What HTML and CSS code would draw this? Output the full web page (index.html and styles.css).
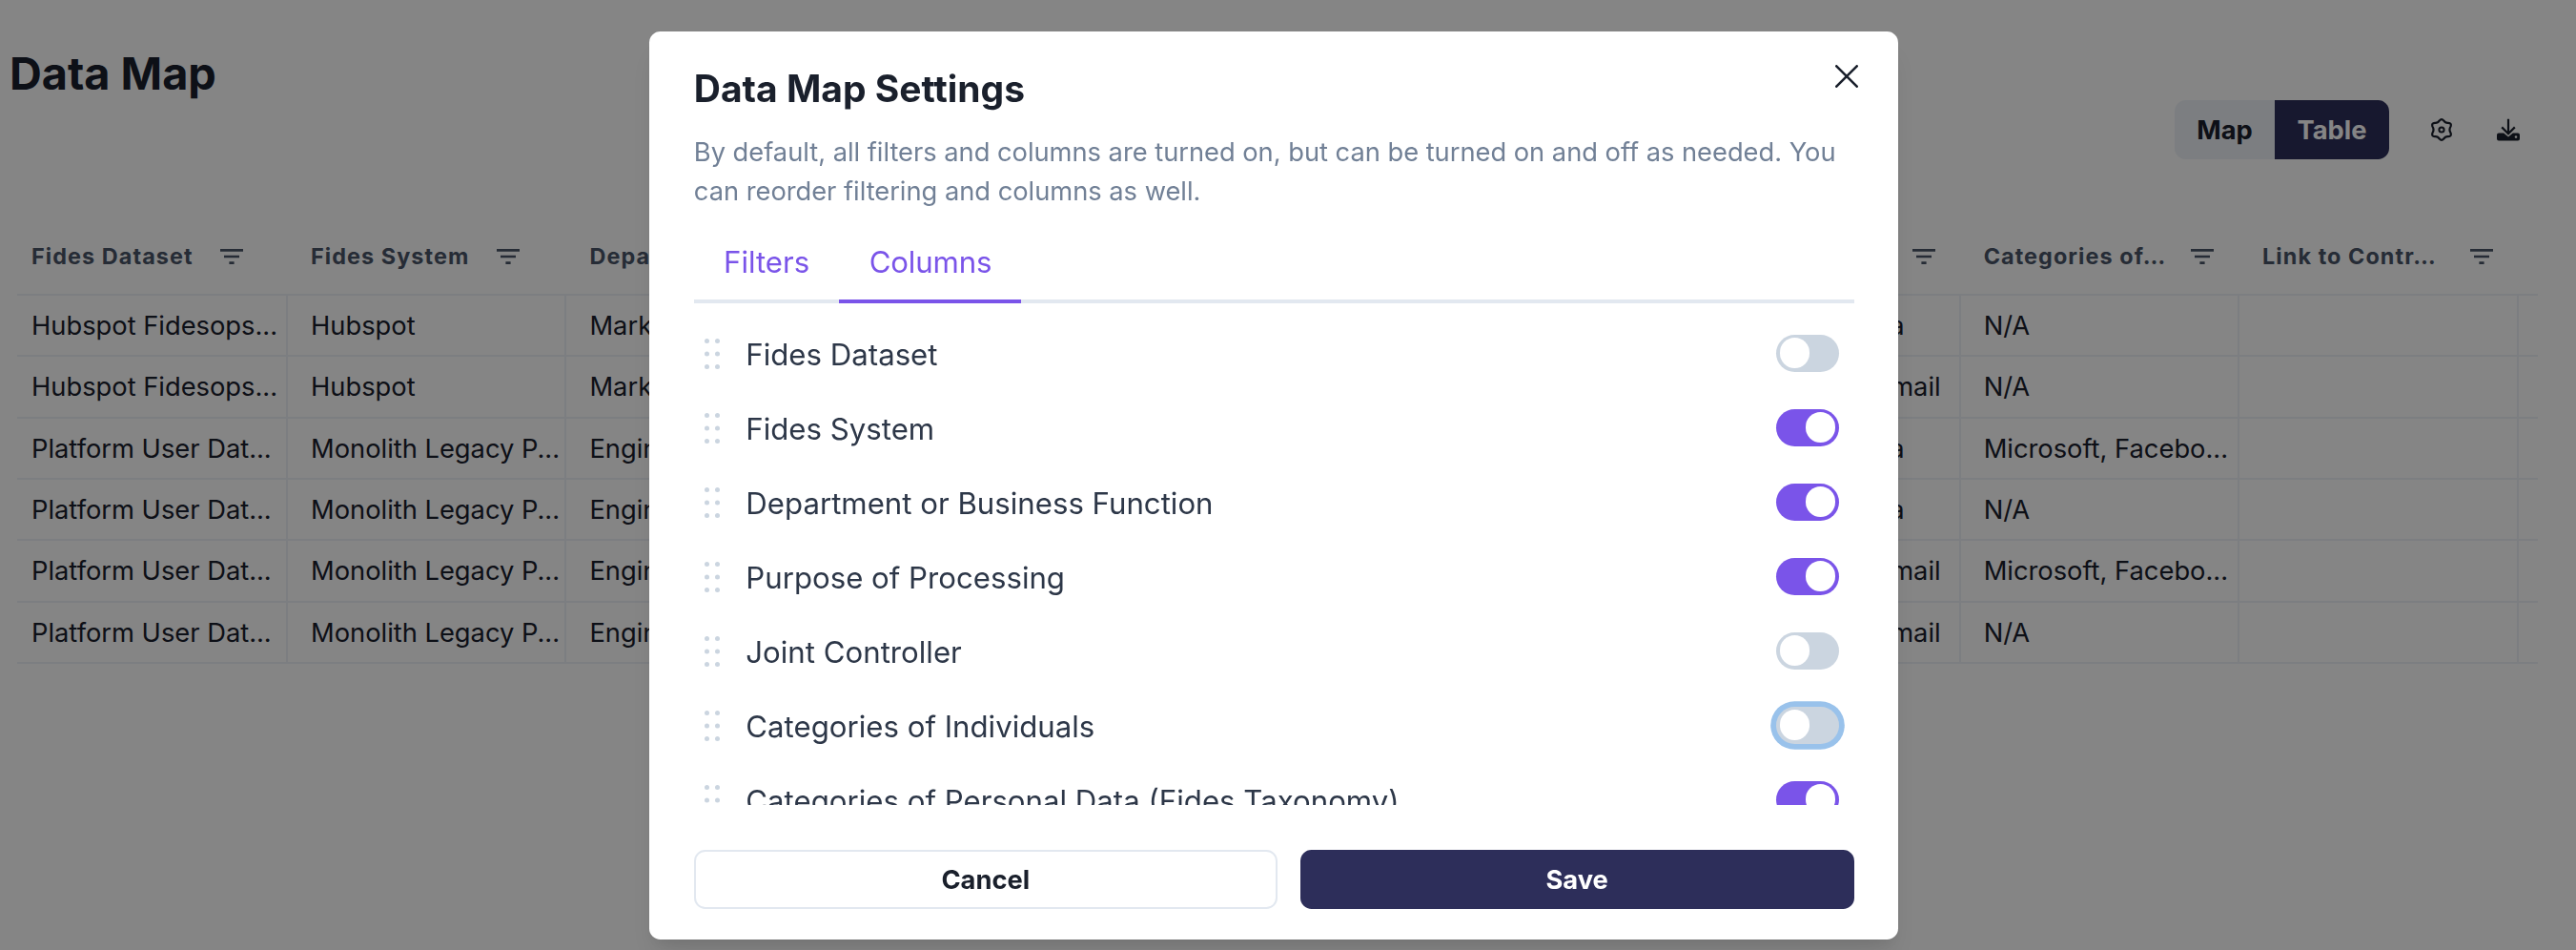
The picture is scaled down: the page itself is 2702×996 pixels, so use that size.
FILE: index.html
```html
<!DOCTYPE html>
<html lang="en">
<head>
<meta charset="utf-8">
<title>Data Map</title>
<link rel="stylesheet" href="styles.css">
</head>
<body>
<svg class="defs" aria-hidden="true">
  <symbol id="filter" viewBox="0 0 24 16"><path d="M0 0h24v2.7H0zM4 6.7h16v2.6H4zM9.4 13.3h5.2V16H9.4z" fill="currentColor"/></symbol>
  <symbol id="grip" viewBox="0 0 16 32"><g fill="#cbd5e0"><circle cx="2.5" cy="2.5" r="2.5"/><circle cx="13.5" cy="2.5" r="2.5"/><circle cx="2.5" cy="16" r="2.5"/><circle cx="13.5" cy="16" r="2.5"/><circle cx="2.5" cy="29.5" r="2.5"/><circle cx="13.5" cy="29.5" r="2.5"/></g></symbol>
</svg>
<main class="page">
  <header class="top">
    <h1 class="page-title">Data Map</h1>
    <div class="tools">
      <div class="switcher"><button class="seg seg-map">Map</button><button class="seg seg-table">Table</button></div>
      <svg class="tool gear" viewBox="-12 -12 24 24"><path d="M-2.200 -9.600Q0 -12 2.200 -9.600Q3.900 -6.800 7 -7.100Q10.800 -6.800 9.600 -3.500Q7.300 0 9.600 3.500Q10.800 6.800 7 7.100Q3.900 6.800 2.200 9.600Q0 12 -2.200 9.600Q-3.900 6.800 -7 7.100Q-10.800 6.800 -9.600 3.500Q-7.300 0 -9.600 -3.500Q-10.800 -6.800 -7 -7.100Q-3.900 -6.800 -2.200 -9.600Z" fill="none" stroke="#1a202c" stroke-width="2.200"/><circle r="2.600" fill="none" stroke="#1a202c" stroke-width="2"/></svg>
      <svg class="tool" viewBox="0 0 24 24"><path d="M12 .8V16M5.2 9.4L12 16.2l6.800-6.800" fill="none" stroke="#1a202c" stroke-width="2.200"/><path fill-rule="evenodd" d="M2 15.500h5.200L12 19.500l4.800-4H22a2 2 0 0 1 2 2V21.500a2 2 0 0 1-2 2H2a2 2 0 0 1-2-2V17.500a2 2 0 0 1 2-2zM20 18.200a1.300 1.300 0 1 0 .01 0z" fill="#1a202c"/></svg>
    </div>
  </header>
  <div class="table">
    <div class="row head">
      <div class="cell"><span>Fides Dataset</span><svg class="fi"><use href="#filter"/></svg></div>
      <div class="cell"><span>Fides System</span><svg class="fi"><use href="#filter"/></svg></div>
      <div class="cell"><span class="full">Departme…</span><svg class="fi"><use href="#filter"/></svg></div>
      <div class="cell"></div><div class="cell"></div><div class="cell"></div>
      <div class="cell"><span class="full">Categories of…</span><svg class="fi"><use href="#filter"/></svg></div>
      <div class="cell"><span class="full">Categories of…</span><svg class="fi"><use href="#filter"/></svg></div>
      <div class="cell"><span class="full">Link to Contr…</span><svg class="fi"><use href="#filter"/></svg></div>
      <div></div>
    </div>
    <div class="row"><div class="cell">Hubspot Fidesops...</div><div class="cell">Hubspot</div><div class="cell">Marketing</div><div class="cell"></div><div class="cell"></div><div class="cell"></div><div class="cell end data">Telemetry Data</div><div class="cell">N/A</div><div class="cell"></div><div></div></div>
    <div class="row"><div class="cell">Hubspot Fidesops...</div><div class="cell">Hubspot</div><div class="cell">Marketing</div><div class="cell"></div><div class="cell"></div><div class="cell"></div><div class="cell end">Contact Email</div><div class="cell">N/A</div><div class="cell"></div><div></div></div>
    <div class="row"><div class="cell">Platform User Dat...</div><div class="cell">Monolith Legacy P...</div><div class="cell">Engineering</div><div class="cell"></div><div class="cell"></div><div class="cell"></div><div class="cell end data">Telemetry Data</div><div class="cell">Microsoft, Facebo...</div><div class="cell"></div><div></div></div>
    <div class="row"><div class="cell">Platform User Dat...</div><div class="cell">Monolith Legacy P...</div><div class="cell">Engineering</div><div class="cell"></div><div class="cell"></div><div class="cell"></div><div class="cell end data">Telemetry Data</div><div class="cell">N/A</div><div class="cell"></div><div></div></div>
    <div class="row"><div class="cell">Platform User Dat...</div><div class="cell">Monolith Legacy P...</div><div class="cell">Engineering</div><div class="cell"></div><div class="cell"></div><div class="cell"></div><div class="cell end">Contact Email</div><div class="cell">Microsoft, Facebo...</div><div class="cell"></div><div></div></div>
    <div class="row"><div class="cell">Platform User Dat...</div><div class="cell">Monolith Legacy P...</div><div class="cell">Engineering</div><div class="cell"></div><div class="cell"></div><div class="cell"></div><div class="cell end">Contact Email</div><div class="cell">N/A</div><div class="cell"></div><div></div></div>
  </div>
</main>
<div class="overlay">
  <section class="modal" role="dialog">
    <div class="modal-head">
      <h2 class="modal-title">Data Map Settings</h2>
      <svg class="close" viewBox="0 0 24 24"><path d="M1.300 1.300L22.700 22.700M22.700 1.300L1.300 22.700" stroke="#1a202c" stroke-width="2.600" stroke-linecap="round"/></svg>
    </div>
    <p class="desc">By default, all filters and columns are turned on, but can be turned on and off as needed. You<br>can reorder filtering and columns as well.</p>
    <nav class="tabs"><span class="tab">Filters</span><span class="tab active">Columns</span></nav>
    <div class="list">
      <div class="item"><svg class="grip"><use href="#grip"/></svg><span class="name">Fides Dataset</span><i class="toggle"></i></div>
      <div class="item"><svg class="grip"><use href="#grip"/></svg><span class="name">Fides System</span><i class="toggle on"></i></div>
      <div class="item"><svg class="grip"><use href="#grip"/></svg><span class="name">Department or Business Function</span><i class="toggle on"></i></div>
      <div class="item"><svg class="grip"><use href="#grip"/></svg><span class="name">Purpose of Processing</span><i class="toggle on"></i></div>
      <div class="item"><svg class="grip"><use href="#grip"/></svg><span class="name">Joint Controller</span><i class="toggle"></i></div>
      <div class="item"><svg class="grip"><use href="#grip"/></svg><span class="name">Categories of Individuals</span><i class="toggle focus"></i></div>
      <div class="item"><svg class="grip"><use href="#grip"/></svg><span class="name">Categories of Personal Data (Fides Taxonomy)</span><i class="toggle on"></i></div>
    </div>
    <footer class="actions"><button class="btn cancel">Cancel</button><button class="btn save">Save</button></footer>
  </section>
</div>
</body>
</html>
```

FILE: styles.css
```css
* { box-sizing: border-box; }
body { margin: 0; height: 996px; overflow: hidden; background: #fff; color: #1a202c; font-family: Inter, sans-serif; font-size: 27.3px; }
h1, h2, p { margin: 0; }
button { border: 0; padding: 0; font: inherit; color: inherit; }
.defs { display: none; }

.top { display: flex; justify-content: space-between; height: 223px; padding: 48px 59px 0 10px; }
.page-title { font-size: 46.8px; line-height: 58px; font-weight: 700; }
.tools { display: flex; height: 62.4px; margin-top: 57px; align-items: center; }
.switcher { display: flex; height: 62.4px; border-radius: 11.7px; overflow: hidden; margin-right: 43px; }
.seg { font-weight: 650; }
.seg-map { width: 105px; background: #edf2f7; }
.seg-table { width: 120px; background: #2d2e5a; color: #fff; }
.tool { width: 24px; height: 24px; }
.gear { margin-right: 46px; }

.table { width: 2643.5px; margin-left: 18px; }
.row { display: grid; grid-template-columns: 284px repeat(8, 292.45px) 1fr; height: 64.35px; border-bottom: 2px solid #edf2f7; line-height: 64px; }
.cell { height: 62.35px; padding-left: 24px; border-right: 2px solid #edf2f7; white-space: nowrap; overflow: hidden; }
.cell:first-child { padding-left: 15px; }
.head { height: 87px; font-size: 23.4px; font-weight: 700; letter-spacing: 1.07px; color: #4a5568; }
.head .cell { display: flex; align-items: center; border: 0; height: 92px; }
.fi { width: 24px; height: 16px; margin-left: 28.5px; flex: none; }
.full { width: 189px; }
.cell.end { text-align: right; padding-right: 19px; }
.cell.data { padding-right: 57px; }

.overlay { position: fixed; inset: 0; background: rgba(0, 0, 0, .48); display: flex; justify-content: center; align-items: flex-start; padding: 33px 30px 0 0; }
.modal { width: 1310.4px; height: 952px; padding: 33px 46.500px 32px 47px; background: #fff; border-radius: 11.7px; box-shadow: 0 20px 30px -6px rgba(0, 0, 0, .1), 0 8px 12px -4px rgba(0, 0, 0, .06); }
.modal-head { display: flex; justify-content: space-between; }
.modal-title { font-size: 39px; line-height: 54px; font-weight: 680; }
.close { width: 24px; height: 24px; margin: 2px -4.500px 0 0; }
.desc { margin-top: 19px; line-height: 41px; color: #718096; white-space: nowrap; letter-spacing: -.025px; }
.tabs { display: flex; height: 77px; margin-top: 20px; border-bottom: 4px solid #e2e8f0; font-size: 31.2px; line-height: 69px; color: #7a54e9; }
.tab { height: 77px; padding: 0 31.2px; }
.active { border-bottom: 4px solid #7a54e9; letter-spacing: -.15px; }
.list { height: 526px; overflow: hidden; padding-top: 13px; }
.item { display: flex; align-items: center; height: 78px; padding: 0 15.6px 0 11.5px; color: #2d3748; }
.grip { width: 16px; height: 32px; margin-top: 1px; }
.name { flex: 1; margin-left: 27px; padding-top: 3px; font-size: 31.2px; line-height: 40px; white-space: nowrap; }
.toggle { width: 66.3px; height: 39px; border-radius: 20px; padding: 3.9px; background: #cbd5e0; }
.toggle::before { content: ""; display: block; width: 31.2px; height: 31.2px; border-radius: 50%; background: #fff; }
.on { background: #7a54e9; }
.on::before { margin-left: 27.3px; }
.focus { box-shadow: 0 0 0 5.8px #99c2eb; }
.actions { display: flex; justify-content: space-between; margin-top: 47px; }
.btn { height: 62.4px; border-radius: 11.7px; font-weight: 650; }
.cancel { width: 612px; background: #fff; border: 2px solid #e2e8f0; }
.save { width: 581px; background: #2d2e5a; color: #fff; }
```
